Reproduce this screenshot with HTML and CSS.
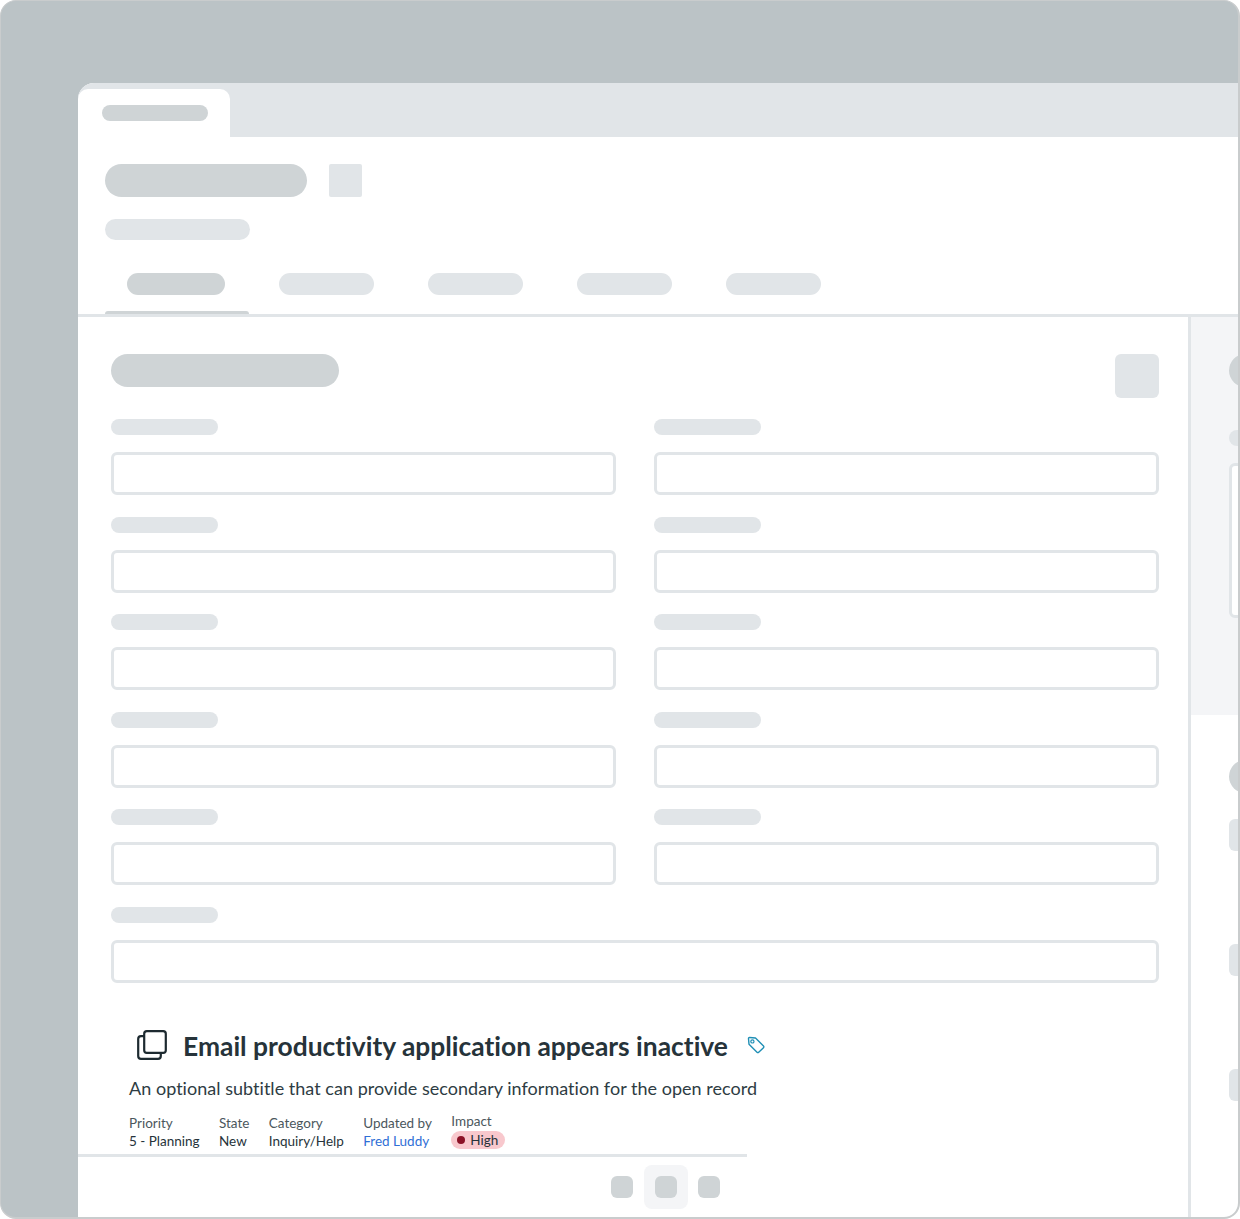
FILE: index.html
```html
<!DOCTYPE html>
<html lang="en">
<head>
<meta charset="utf-8">
<title>Record form</title>
<link rel="stylesheet" href="styles.css">
</head>
<body>
<div class="frame">
  <div class="window">
    <div class="tabbar"><div class="tab"><span class="sk sk-tab"></span></div></div>
    <header class="head">
      <div class="head-title"><span class="sk sk-title"></span><span class="sk-square"></span></div>
      <span class="sk sk-sub"></span>
      <nav class="nav">
        <div class="nav-item active"><span class="sk nav-pill-on"></span><span class="nav-bar"></span></div>
        <div class="nav-item"><span class="sk nav-pill"></span></div>
        <div class="nav-item"><span class="sk nav-pill"></span></div>
        <div class="nav-item"><span class="sk nav-pill"></span></div>
        <div class="nav-item"><span class="sk nav-pill"></span></div>
      </nav>
    </header>
    <div class="body">
      <main class="main">
        <div class="form-head"><span class="sk sk-form-title"></span><span class="sk-btn"></span></div>
        <div class="grid">
          <div class="field"><span class="sk sk-label"></span><div class="input"></div></div>
          <div class="field"><span class="sk sk-label"></span><div class="input"></div></div>
          <div class="field"><span class="sk sk-label"></span><div class="input"></div></div>
          <div class="field"><span class="sk sk-label"></span><div class="input"></div></div>
          <div class="field"><span class="sk sk-label"></span><div class="input"></div></div>
          <div class="field"><span class="sk sk-label"></span><div class="input"></div></div>
          <div class="field"><span class="sk sk-label"></span><div class="input"></div></div>
          <div class="field"><span class="sk sk-label"></span><div class="input"></div></div>
          <div class="field"><span class="sk sk-label"></span><div class="input"></div></div>
          <div class="field"><span class="sk sk-label"></span><div class="input"></div></div>
          <div class="field wide"><span class="sk sk-label"></span><div class="input"></div></div>
        </div>
        <section class="record">
          <div class="record-title">
            <svg class="copy-icon" viewBox="0 0 30 30" width="30" height="30" aria-hidden="true">
              <rect x="7.2" y="1.2" width="21.6" height="21.6" rx="2.6" fill="none" stroke="#1d2a30" stroke-width="2.2"/>
              <path d="M7.2 6.2H4a2.8 2.8 0 0 0-2.8 2.8v17a2.8 2.8 0 0 0 2.8 2.8h17a2.8 2.8 0 0 0 2.8-2.8v-3.2" fill="none" stroke="#1d2a30" stroke-width="2.2"/>
            </svg>
            <h1 class="title">Email productivity application appears inactive</h1>
            <svg class="tag-icon" viewBox="0 0 18 18" width="18" height="18" aria-hidden="true">
              <path d="M1.5 2.6a1 1 0 0 1 1.1-1.1l5.9.5 8 8a1.2 1.2 0 0 1 0 1.7l-4.8 4.6a1.2 1.2 0 0 1-1.7 0l-8-8z" fill="none" stroke="#1f8fb5" stroke-width="1.4" stroke-linejoin="round"/>
              <circle cx="5.4" cy="5.4" r="1.6" fill="none" stroke="#1f8fb5" stroke-width="1.2"/>
            </svg>
          </div>
          <p class="subtitle">An optional subtitle that can provide secondary information for the open record</p>
          <dl class="meta">
            <div class="meta-item"><dt>Priority</dt><dd>5 - Planning</dd></div>
            <div class="meta-item"><dt>State</dt><dd>New</dd></div>
            <div class="meta-item"><dt>Category</dt><dd>Inquiry/Help</dd></div>
            <div class="meta-item"><dt>Updated by</dt><dd class="link">Fred Luddy</dd></div>
            <div class="meta-item impact"><dt>Impact</dt><dd><span class="badge"><i class="dot"></i>High</span></dd></div>
          </dl>
        </section>
        <div class="pager-wrap">
          <div class="pager">
            <span class="pager-slot"><span class="pager-dot"></span></span>
            <span class="pager-slot on"><span class="pager-dot"></span></span>
            <span class="pager-slot"><span class="pager-dot"></span></span>
          </div>
        </div>
      </main>
      <aside class="side">
        <div class="side-top">
          <span class="sk side-pill"></span>
          <span class="sk side-label"></span>
          <div class="side-box"></div>
        </div>
        <div class="side-bottom">
          <span class="sk side-pill"></span>
          <span class="side-card first"></span>
          <span class="side-card"></span>
          <span class="side-card"></span>
        </div>
      </aside>
    </div>
  </div>
</div>
</body>
</html>
```

FILE: styles.css
```css
* { box-sizing: border-box; }
html, body { margin: 0; padding: 0; background: #fff; }
body { width: 1240px; height: 1219px; overflow: hidden; font-family: "Lato", "Liberation Sans", sans-serif; }

.frame {
  width: 1240px; height: 1219px;
  background: #bbc3c6;
  border: 1px solid #c9cccd;
  border-width: 1px 2px 2px 1px;
  border-radius: 16px;
  padding: 82px 0 0 77px;
  overflow: hidden;
}
.window {
  height: 1134px;
  background: #fff;
  border-top-left-radius: 16px;
  overflow: hidden;
  display: flex;
  flex-direction: column;
}

.sk { display: block; border-radius: 999px; background: #e1e5e8; }

.tabbar { height: 54px; flex: none; background: #e1e5e8; padding-top: 6px; display: flex; }
.tab {
  width: 152px; height: 48px; background: #fff;
  border-radius: 10px 10px 0 0;
  padding: 16px 0 0 24px;
}
.sk-tab { width: 106px; height: 16px; background: #cfd4d6; }

.head { height: 180px; flex: none; border-bottom: 3px solid #e1e5e8; padding: 27px 0 0 27px; display: flex; flex-direction: column; }
.head-title { display: flex; gap: 22px; height: 33px; }
.sk-title { width: 202px; height: 33px; background: #cfd4d6; }
.sk-square { width: 33px; height: 33px; background: #e1e5e8; border-radius: 2px; }
.sk-sub { width: 145px; height: 22px; margin-top: 22px; }

.nav { display: flex; margin-top: 33px; flex: 1; }
.nav-item { width: 149px; padding-left: 22px; }
.nav-item.active { width: 144px; margin-right: 8px; height: 41px; display: flex; flex-direction: column; justify-content: space-between; }
.nav-bar { display: block; height: 3px; margin-left: -22px; background: #cfd4d6; border-radius: 3px 3px 0 0; }
.nav-pill-on { width: 98px; height: 22px; background: #cfd4d6; }
.nav-pill { width: 95px; height: 22px; }

.body { flex: 1; display: flex; min-height: 0; }
.main { width: 1113px; flex: none; border-right: 3px solid #e1e5e8; padding-top: 37px; display: flex; flex-direction: column; }

.form-head { display: flex; justify-content: space-between; padding: 0 29px 0 33px; height: 44px; }
.sk-form-title { width: 228px; height: 33px; background: #cfd4d6; }
.sk-btn { width: 44px; height: 44px; background: #e1e5e8; border-radius: 6px; }

.grid { display: grid; grid-template-columns: 505px 505px; column-gap: 38px; row-gap: 22px; padding: 21px 0 0 33px; }
.field { display: flex; flex-direction: column; gap: 17px; height: 75.5px; }
.field.wide { grid-column: 1 / -1; }
.sk-label { width: 107px; height: 16px; flex: none; }
.input { height: 43px; flex: none; border: 3px solid #e1e5e8; border-radius: 6px; background: #fff; }

.record { padding: 46.5px 0 4px 51px; }
.record-title { display: flex; align-items: center; height: 32px; padding-left: 8px; }
.copy-icon { flex: none; }
.title { margin: 2px 0 0 16px; font-size: 26.4px; line-height: 32px; font-weight: 700; color: #26333a; white-space: nowrap; font-variant-ligatures: none; }
.tag-icon { flex: none; margin-left: 19px; margin-top: 1px; }
.subtitle { margin: 15px 0 0; font-size: 18px; line-height: 24px; letter-spacing: .03px; color: #2e3c43; white-space: nowrap; }
.meta { display: flex; gap: 19.4px; margin: 14px 0 0; font-size: 13.5px; line-height: 18px; }
.meta dt { color: #4b575d; }
.meta dd { margin: 0; color: #26333a; }
.meta dd.link { color: #2f6fd6; }
.impact { margin-top: -2px; }
.badge { display: inline-flex; align-items: center; height: 18px; background: #f8c8cd; border-radius: 9px; padding: 0 7px 0 6px; color: #26333a; }
.dot { width: 8px; height: 8px; border-radius: 50%; background: #8b1226; margin-right: 5px; }

.pager-wrap { width: 669px; border-top: 3px solid #e1e5e8; padding-top: 8px; }
.pager { display: flex; justify-content: flex-end; padding-right: 16.5px; }
.pager-slot { width: 44px; height: 44px; display: flex; align-items: center; justify-content: center; border-radius: 8px; margin-right: -.5px; }
.pager-slot.on { background: #f4f5f7; }
.pager-dot { width: 22px; height: 22px; background: #cfd4d6; border-radius: 6px; }

.side { flex: 1; min-width: 0; overflow: hidden; display: flex; flex-direction: column; }
.side-top { height: 398px; flex: none; background: #f4f5f7; padding: 37px 0 0 38px; }
.side-pill { width: 120px; height: 33px; background: #cfd4d6; }
.side-label { width: 100px; height: 16px; margin-top: 43px; }
.side-box { width: 300px; height: 155px; margin-top: 17px; border: 3px solid #e1e5e8; border-radius: 6px; background: #fff; }
.side-bottom { flex: 1; padding: 45px 0 0 38px; display: flex; flex-direction: column; }
.side-card { display: block; width: 100px; height: 32px; background: #e1e5e8; border-radius: 6px; flex: none; margin-top: 93px; }
.side-card.first { margin-top: 26px; }
```
